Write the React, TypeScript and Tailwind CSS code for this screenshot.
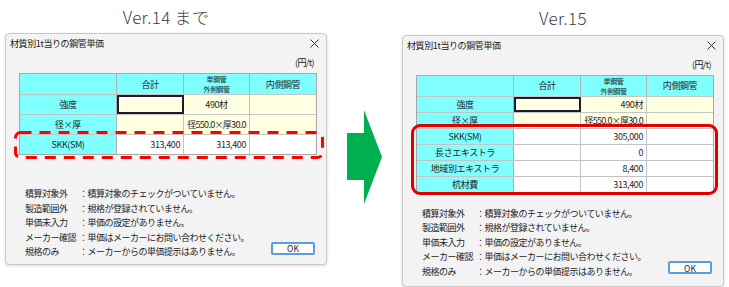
const FONT = { fontFamily: '"Noto Sans CJK JP", "Noto Sans", sans-serif' };

type Cell = { text?: string; bg: "cyan" | "yellow" | "white"; align?: "center" | "right"; selected?: boolean };
type Row = { label: string; cells: Cell[] };

const COLS = ["w-[97px]", "w-[67px]", "w-[66px]", "w-[66px]"];

const bgClass = {
  cyan: "bg-[#80ffff]",
  yellow: "bg-[#ffffe1]",
  white: "bg-white",
};

const LEGEND = [
  ["積算対象外", "積算対象のチェックがついていません。"],
  ["製造範囲外", "規格が登録されていません。"],
  ["単価未入力", "単価の設定がありません。"],
  ["メーカー確認", "単価はメーカーにお問い合わせください。"],
  ["規格のみ", "メーカーからの単価提示はありません。"],
];

const topRowsOld: Row[] = [
  {
    label: "強度",
    cells: [
      { bg: "yellow", selected: true },
      { text: "490材", bg: "yellow", align: "center" },
      { bg: "yellow" },
    ],
  },
  {
    label: "径×厚",
    cells: [
      { bg: "yellow" },
      { text: "径550.0×厚30.0", bg: "yellow", align: "center" },
      { bg: "yellow" },
    ],
  },
];

const topRowsNew: Row[] = [
  {
    label: "強度",
    cells: [
      { bg: "yellow", selected: true },
      { text: "490材", bg: "yellow", align: "right" },
      { bg: "yellow" },
    ],
  },
  {
    label: "径×厚",
    cells: [
      { bg: "yellow" },
      { text: "径550.0×厚30.0", bg: "yellow", align: "right" },
      { bg: "yellow" },
    ],
  },
];

const priceRowsOld: Row[] = [
  {
    label: "SKK(SM)",
    cells: [
      { text: "313,400", bg: "white", align: "right" },
      { text: "313,400", bg: "white", align: "right" },
      { bg: "white" },
    ],
  },
];

const priceRowsNew: Row[] = [
  { label: "SKK(SM)", cells: [{ bg: "white" }, { text: "305,000", bg: "white", align: "right" }, { bg: "white" }] },
  { label: "長さエキストラ", cells: [{ bg: "white" }, { text: "0", bg: "white", align: "right" }, { bg: "white" }] },
  { label: "地域別エキストラ", cells: [{ bg: "white" }, { text: "8,400", bg: "white", align: "right" }, { bg: "white" }] },
  { label: "杭材費", cells: [{ bg: "white" }, { text: "313,400", bg: "white", align: "right" }, { bg: "white" }] },
];

function TableRow({ row, h }: { row: Row; h: string }) {
  return (
    <div className={`flex ${h} border-t border-[#c4c4c4]`}>
      <div className={`${COLS[0]} ${bgClass.cyan} flex items-center justify-center border-r border-[#b0b0b0] whitespace-nowrap`}>
        {row.label}
      </div>
      {row.cells.map((c, i) => (
        <div
          key={i}
          className={`${COLS[i + 1]} ${bgClass[c.bg]} flex items-center px-[3px] whitespace-nowrap overflow-hidden ${
            c.align === "right" ? "justify-end" : "justify-center"
          } ${i < 2 ? "border-r border-[#c4c4c4]" : ""} ${c.selected ? "outline-2 -outline-offset-2 outline-[#1c1c30]" : ""}`}
        >
          <span className={c.text && c.text.length > 8 ? "tracking-[-0.7px]" : ""}>{c.text}</span>
        </div>
      ))}
    </div>
  );
}

function PriceTable({
  topRows,
  priceRows,
  rowH,
  overlay,
}: {
  topRows: Row[];
  priceRows: Row[];
  rowH: string;
  overlay: React.ReactNode;
}) {
  return (
    <div className="w-[298px] border border-[#a8a8a8] text-[9px] tracking-[-0.4px] text-[#1e1e2a] leading-none">
      {/* header */}
      <div className="flex h-[20px] bg-[#80ffff]">
        <div className={`${COLS[0]} border-r border-[#b0b0b0]`} />
        <div className={`${COLS[1]} flex items-center justify-center border-r border-[#b0b0b0]`}>合計</div>
        <div className={`${COLS[2]} flex flex-col items-center justify-center border-r border-[#b0b0b0] text-[7px] leading-[10px]`}>
          <span>単鋼管</span>
          <span>外側鋼管</span>
        </div>
        <div className={`${COLS[3]} flex items-center justify-center`}>内側鋼管</div>
      </div>
      {topRows.map((r) => (
        <TableRow key={r.label} row={r} h={rowH} />
      ))}
      <div className="relative">
        {priceRows.map((r) => (
          <TableRow key={r.label} row={r} h={rowH} />
        ))}
        {overlay}
      </div>
    </div>
  );
}

function Dialog({
  height,
  table,
  legendTop,
  okTop,
}: {
  height: string;
  table: React.ReactNode;
  legendTop: string;
  okTop: string;
}) {
  return (
    <div className={`w-[322px] ${height} bg-[#f3f3f3] border border-[#c9c9c9] rounded-[4px] shadow-[0_1px_3px_rgba(0,0,0,0.15)] flex flex-col`}>
      {/* title bar */}
      <div className="flex items-center justify-between h-[19px] pl-[4px] pr-[6px] text-[9px] tracking-[-0.4px] text-[#1a1a1a]">
        <span>材質別1t当りの鋼管単価</span>
        <svg width="9" height="9" viewBox="0 0 9 9" className="mr-[1px]">
          <path d="M0.5 0.5 L8.5 8.5 M8.5 0.5 L0.5 8.5" stroke="#333" strokeWidth="1" />
        </svg>
      </div>
      <div className="flex justify-end pr-[12px] pt-[3px] h-[20px] text-[9px] tracking-[-0.6px] text-[#1a1a1a]">
        (円/t)
      </div>
      <div className="pl-[13px]">{table}</div>
      <div className={`flex items-end justify-between pl-[19px] pr-[11px] ${legendTop}`}>
        <div className="flex flex-col text-[9px] tracking-[-0.5px] text-[#1e1e2a] leading-[14.5px]">
          {LEGEND.map(([k, v]) => (
            <div key={k} className="flex">
              <span className="w-[54px] whitespace-nowrap">{k}</span>
              <span className="whitespace-nowrap">：{v}</span>
            </div>
          ))}
        </div>
        <button className={`w-[44px] h-[13px] ${okTop} bg-white border-2 border-[#5a9ee0] rounded-[2px] text-[8.5px] leading-none text-[#1a1a1a] flex items-center justify-center`}>
          OK
        </button>
      </div>
    </div>
  );
}

function DashedBox() {
  return (
    <div className="absolute left-[-6px] right-[-8px] top-[-3px] bottom-[-5px] pointer-events-none">
      <svg width="100%" height="100%" preserveAspectRatio="none" className="block overflow-visible">
        <rect
          x="1.5"
          y="1.5"
          width="calc(100% - 3px)"
          height="calc(100% - 3px)"
          rx="5"
          fill="none"
          stroke="#ff0000"
          strokeWidth="3"
          strokeDasharray="11 8"
        />
      </svg>
    </div>
  );
}

function SolidBox() {
  return (
    <div className="absolute left-[-6px] right-[-5px] top-[-4px] bottom-[-3px] border-[3px] border-[#e00000] rounded-[9px] pointer-events-none" />
  );
}

export default function App() {
  return (
    <div className="w-[729px] h-[287px] bg-white overflow-hidden flex pl-[5px]" style={FONT}>
      {/* ================= Ver.14 ================= */}
      <div className="flex flex-col">
        <div className="h-[33px] flex items-center justify-center text-[17px] font-light text-[#3c3c3c] tracking-[0.3px]">
          Ver.14 まで
        </div>
        <Dialog
          height="h-[232px]"
          table={<PriceTable topRows={topRowsOld} priceRows={priceRowsOld} rowH="h-[20px]" overlay={<DashedBox />} />}
          legendTop="mt-[32px]"
          okTop="mb-[5px]"
        />
      </div>

      {/* ================= arrow ================= */}
      <div className="w-[75px] flex items-start justify-center pt-[110px]">
        <svg width="36" height="95" viewBox="0 0 36 95">
          <polygon points="0,23 17,23 17,0 35,47 17,94 17,70 0,70" fill="#00b050" />
        </svg>
      </div>

      {/* ================= Ver.15 ================= */}
      <div className="flex flex-col">
        <div className="h-[35px] flex items-center justify-center text-[17px] font-light text-[#3c3c3c] tracking-[0.3px]">
          Ver.15
        </div>
        <Dialog
          height="h-[254px]"
          table={<PriceTable topRows={topRowsNew} priceRows={priceRowsNew} rowH="h-[16px]" overlay={<SolidBox />} />}
          legendTop="mt-[14px]"
          okTop="mb-[5px]"
        />
      </div>
    </div>
  );
}
